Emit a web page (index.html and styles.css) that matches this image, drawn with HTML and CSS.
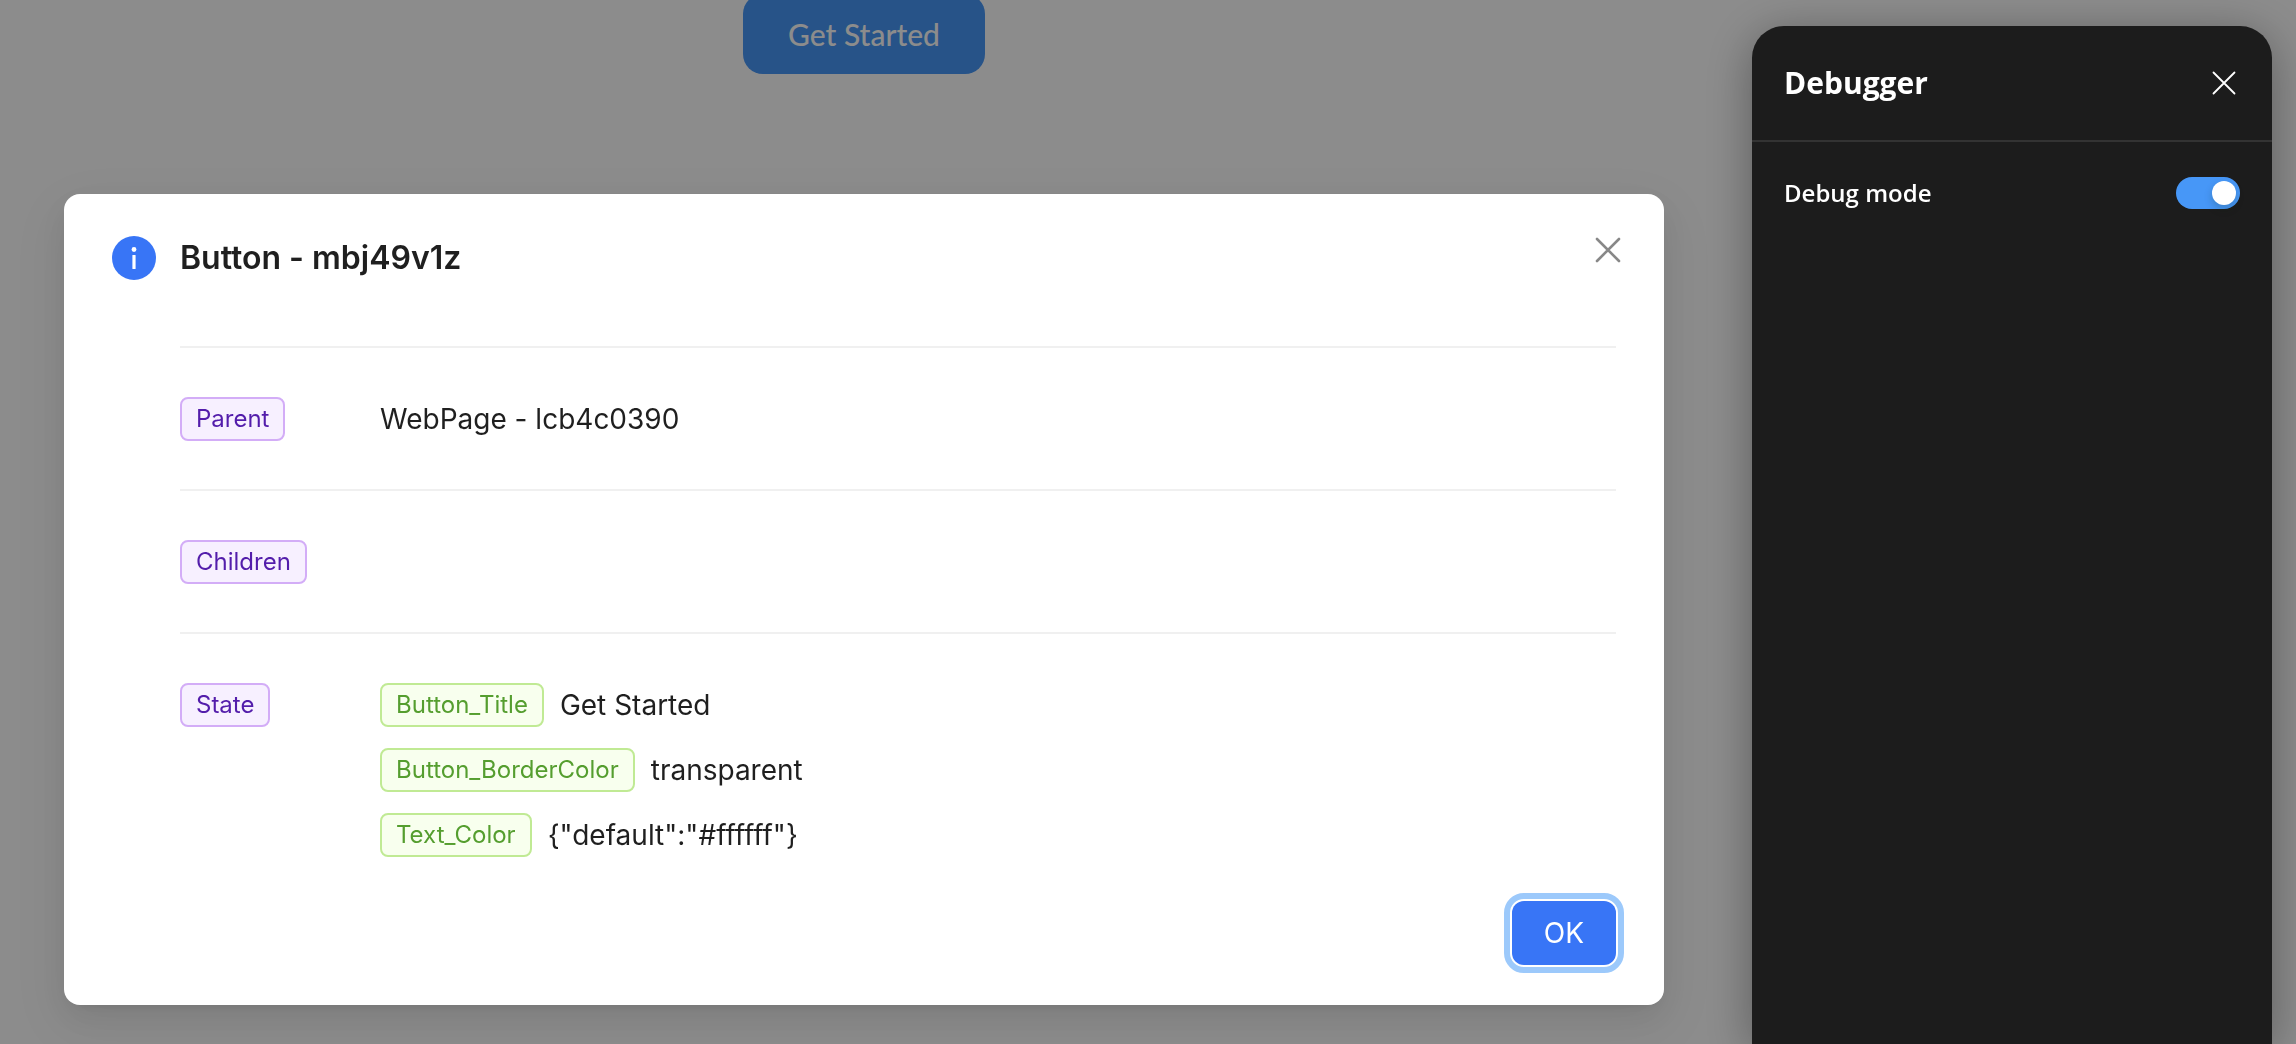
FILE: index.html
```
<!DOCTYPE html>
<html lang="en">
<head>
<meta charset="utf-8">
<title>Debugger</title>
<link rel="stylesheet" href="styles.css">
</head>
<body>
<main class="page">
  <button class="cta" type="button">Get Started</button>
</main>

<div class="mask"></div>

<div class="modal-wrap">
  <section class="modal" role="dialog" aria-labelledby="modal-title">
    <button class="modal-close" type="button" aria-label="Close">
      <svg width="26" height="26" viewBox="0 0 26 26"><path d="M2 2l22 22M24 2L2 24" stroke="#888" stroke-width="2.6" stroke-linecap="round"/></svg>
    </button>
    <header class="modal-header">
      <svg width="44" height="44" viewBox="0 0 44 44"><circle cx="22" cy="22" r="22" fill="#3875f6"/><circle cx="22" cy="13.5" r="2.4" fill="#fff"/><rect x="20.4" y="19" width="3.2" height="14" rx=".6" fill="#fff"/></svg>
      <h1 class="modal-title" id="modal-title">Button - mbj49v1z</h1>
    </header>
    <dl class="details">
      <div class="detail">
        <dt><span class="tag tag-purple">Parent</span></dt>
        <dd>WebPage - lcb4c0390</dd>
      </div>
      <div class="detail">
        <dt><span class="tag tag-purple">Children</span></dt>
        <dd></dd>
      </div>
      <div class="detail">
        <dt><span class="tag tag-purple">State</span></dt>
        <dd class="states">
          <div class="state"><span class="tag tag-green">Button_Title</span><span>Get Started</span></div>
          <div class="state"><span class="tag tag-green">Button_BorderColor</span><span>transparent</span></div>
          <div class="state"><span class="tag tag-green">Text_Color</span><span>{"default":"#ffffff"}</span></div>
        </dd>
      </div>
    </dl>
    <footer class="modal-footer">
      <button class="ok" type="button">OK</button>
    </footer>
  </section>
</div>

<aside class="drawer">
  <header class="drawer-header">
    <h2 class="drawer-title">Debugger</h2>
    <button class="drawer-close" type="button" aria-label="Close debugger">
      <svg width="24" height="24" viewBox="0 0 24 24"><path d="M1.5 1.5l21 21M22.5 1.5l-21 21" stroke="#fff" stroke-width="1.8" stroke-linecap="round"/></svg>
    </button>
  </header>
  <div class="setting">
    <label for="debug-mode">Debug mode</label>
    <input class="switch" id="debug-mode" type="checkbox" role="switch" checked>
  </div>
</aside>
</body>
</html>
```
FILE: styles.css
```
* {
  box-sizing: border-box;
}

body {
  margin: 0;
  min-height: 100vh;
  background: #fff;
  color: #1f1f1f;
  font-family: Inter, "Liberation Sans", sans-serif;
  font-size: 28px;
  line-height: 44px;
  overflow: hidden;
}

button {
  border: 0;
  padding: 0;
  background: none;
  font: inherit;
  cursor: pointer;
}

svg {
  display: block;
  fill: none;
}

h1,
h2,
dl,
dd {
  margin: 0;
}

/* Page behind the dialog */
.page {
  display: flex;
  justify-content: center;
  margin-right: 568px;
}

.cta {
  height: 80px;
  margin-top: -6px;
  padding: 0 45px;
  border-radius: 20px;
  background: #4797f7;
  color: #fff;
  font-family: Lato, sans-serif;
  font-size: 30px;
  font-weight: 500;
}

.mask {
  position: fixed;
  inset: 0;
  background: rgba(0, 0, 0, 0.45);
}

/* Dialog */
.modal-wrap {
  position: fixed;
  inset: 0 568px 0 0;
  padding: 194px 64px 0;
}

.modal {
  position: relative;
  padding: 42px 48px 40px;
  border-radius: 16px;
  background: #fff;
  box-shadow: 0 12px 32px rgba(0, 0, 0, 0.08), 0 6px 12px -8px rgba(0, 0, 0, 0.12), 0 18px 56px 16px rgba(0, 0, 0, 0.05);
}

.modal-close {
  position: absolute;
  top: 43px;
  right: 43px;
}

.modal-header {
  display: flex;
  align-items: center;
  gap: 24px;
}

.modal-title {
  font-size: 32px;
  font-weight: 600;
}

.details {
  margin: 66px 0 44px 68px;
}

.detail {
  display: grid;
  grid-template-columns: 200px 1fr;
  padding: 49px 0 48px;
  border-top: 2px solid #f0f0f0;
}

.detail:last-child {
  padding-bottom: 0;
}

dt,
.state {
  display: flex;
  align-items: flex-start;
}

.states {
  display: grid;
  gap: 21px;
}

.state {
  gap: 16px;
}

.tag {
  padding: 0 14px;
  border: 2px solid;
  border-radius: 8px;
  font-size: 24px;
  line-height: 40px;
}

.tag-purple {
  border-color: #d3adf7;
  background: #f7f0ff;
  color: #531dab;
}

.tag-green {
  border-color: #c0ea94;
  background: #f8ffee;
  color: #559e2f;
}

.modal-footer {
  display: flex;
  justify-content: flex-end;
}

.ok {
  height: 64px;
  padding: 0 32px;
  border-radius: 12px;
  outline: 6px solid #9cc9fb;
  outline-offset: 2px;
  background: #3875f6;
  color: #fff;
}

/* Debugger drawer */
.drawer {
  position: fixed;
  top: 26px;
  right: 24px;
  bottom: 0;
  width: 520px;
  border-radius: 32px 32px 0 0;
  background: #1c1c1c;
  box-shadow: 0 8px 48px rgba(0, 0, 0, 0.35);
  color: #fff;
  font-family: "Open Sans", sans-serif;
  font-weight: 700;
}

.drawer-header,
.setting {
  display: flex;
  align-items: center;
  justify-content: space-between;
  padding: 0 32px;
}

.drawer-header {
  height: 116px;
  border-bottom: 2px solid #333;
}

.drawer-title {
  font-size: 30px;
}

.drawer-close {
  margin-right: 4px;
}

.setting {
  padding-top: 29px;
  font-size: 24px;
  font-weight: 600;
}

.switch {
  appearance: none;
  display: flex;
  justify-content: flex-end;
  width: 64px;
  height: 32px;
  margin: 0;
  padding: 4px;
  border-radius: 16px;
  background: #4797f7;
}

.switch::before {
  content: "";
  width: 24px;
  height: 24px;
  border-radius: 50%;
  background: #fff;
  box-shadow: 0 4px 8px rgba(0, 35, 11, 0.2);
}

.switch:not(:checked) {
  justify-content: flex-start;
  background: #666;
}
```
